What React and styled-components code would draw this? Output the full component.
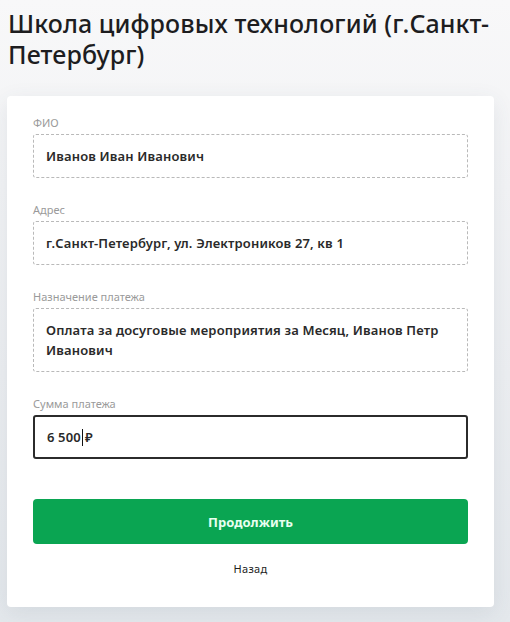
import React from "react";
import styled, { createGlobalStyle } from "styled-components";

const GlobalStyle = createGlobalStyle`
  html, body {
    margin: 0;
    padding: 0;
  }
  body {
    background: linear-gradient(180deg, #f8f8f9 0%, #eceef1 60%, #e4e8ec 100%);
    min-height: 622px;
    font-family: "Noto Sans", "Open Sans", sans-serif;
    color: #222;
  }
`;

const Page = styled.div`
  padding: 8px 16px 14px 7px;
  box-sizing: border-box;
  min-height: 622px;
`;

const Title = styled.h1`
  margin: 0 0 26px 1px;
  font-size: 25px;
  line-height: 31px;
  font-weight: 500;
  color: #1d1d1f;
  letter-spacing: 0.1px;
`;

const Card = styled.div`
  background: #fff;
  border-radius: 4px;
  box-shadow: 0 6px 22px rgba(60, 80, 100, 0.1);
  padding: 20px 26px 29px;
`;

const Field = styled.div`
  display: flex;
  flex-direction: column;
  margin-bottom: 25px;
`;

const Label = styled.div`
  font-size: 11px;
  line-height: 14px;
  color: #9a9a9a;
  margin-bottom: 4px;
`;

const Box = styled.div`
  box-sizing: border-box;
  min-height: 44px;
  padding: ${(p) => (p.$active ? "10px 12px" : "11px 12px")};
  border: ${(p) => (p.$active ? "2px solid #2b2b2b" : "1px dashed #b9b9b9")};
  border-radius: 3px;
  font-size: 13px;
  line-height: 20px;
  font-weight: 600;
  letter-spacing: 0.15px;
  color: #2a2a2a;
  display: flex;
  align-items: center;
`;

const Caret = styled.span`
  display: inline-block;
  width: 1px;
  height: 17px;
  background: #111;
  margin: 0 2px 0 1px;
`;

const Submit = styled.button`
  display: block;
  width: 100%;
  height: 45px;
  margin-top: 40px;
  border: none;
  border-radius: 4px;
  background: #0aa552;
  color: #e8fff0;
  font-family: "Noto Sans", sans-serif;
  font-size: 13px;
  font-weight: 700;
  cursor: pointer;
`;

const Back = styled.div`
  margin-top: 16px;
  text-align: center;
  font-size: 11px;
  line-height: 18px;
  color: #222;
  letter-spacing: 0.3px;
`;

const fields = [
  { label: "ФИО", value: "Иванов Иван Иванович" },
  { label: "Адрес", value: "г.Санкт-Петербург, ул. Электроников 27, кв 1" },
  {
    label: "Назначение платежа",
    value: "Оплата за досуговые мероприятия за Месяц, Иванов Петр Иванович",
  },
];

export default function App() {
  return (
    <>
      <GlobalStyle />
      <Page>
        <Title>Школа цифровых технологий (г.Санкт-Петербург)</Title>
        <Card>
          {fields.map((f) => (
            <Field key={f.label}>
              <Label>{f.label}</Label>
              <Box>{f.value}</Box>
            </Field>
          ))}
          <Field>
            <Label>Сумма платежа</Label>
            <Box $active>
              6 500
              <Caret />₽
            </Box>
          </Field>
          <Submit>Продолжить</Submit>
          <Back>Назад</Back>
        </Card>
      </Page>
    </>
  );
}
